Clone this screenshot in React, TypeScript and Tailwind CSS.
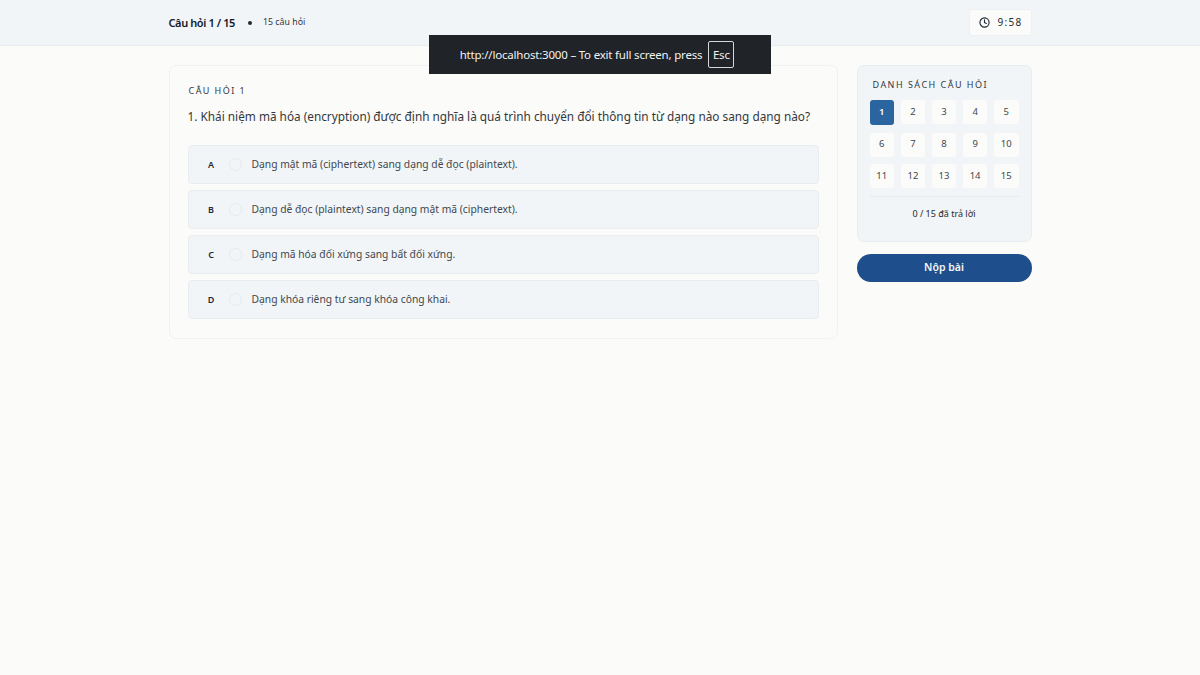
import { Clock } from "lucide-react";

const options = [
  { key: "A", text: "Dạng mật mã (ciphertext) sang dạng dễ đọc (plaintext)." },
  { key: "B", text: "Dạng dễ đọc (plaintext) sang dạng mật mã (ciphertext)." },
  { key: "C", text: "Dạng mã hóa đối xứng sang bất đối xứng." },
  { key: "D", text: "Dạng khóa riêng tư sang khóa công khai." },
];

const numbers = Array.from({ length: 15 }, (_, i) => i + 1);

function App() {
  return (
    <div className="relative min-h-[675px] bg-[#fbfbf9] font-['Noto_Sans','Open_Sans',sans-serif] text-[#1f2933]">
      <header className="h-[46px] border-b border-[#e8ecef] bg-[#f1f5f8]">
        <div className="mx-auto flex h-[45px] w-[863px] items-center justify-between">
          <div className="flex items-center pt-px">
            <span className="text-[11px] font-semibold tracking-[-0.4px] text-[#111827]">Câu hỏi 1 / 15</span>
            <span className="ml-[13px] h-[4px] w-[4px] rounded-full bg-[#1f2933]" />
            <span className="ml-[11px] text-[8.8px] text-[#33383d]">15 câu hỏi</span>
          </div>
          <div className="flex h-[27px] w-[63px] items-center justify-center gap-[7px] rounded-[3px] border border-[#eef1f3] bg-[#fbfbf9] pl-[2px]">
            <Clock size={11} strokeWidth={2.4} className="text-[#1f2933]" />
            <span className="text-[10px] tracking-[0.13em] text-[#26292c]">9:58</span>
          </div>
        </div>
      </header>

      <div className="absolute left-[429px] top-[35px] flex h-[39px] w-[342px] items-center justify-center gap-[6px] bg-[#202327] pr-[6px] text-[11.5px] tracking-[-0.2px] text-[#f1f3f4]">
        <span>http://localhost:3000 – To exit full screen, press</span>
        <span className="flex h-[27px] w-[26px] items-center justify-center rounded-[2px] border border-[#d5d7d9]">Esc</span>
      </div>

      <main className="mx-auto flex w-[863px] items-start gap-[19px] pt-[19px]">
        <section className="h-[274px] w-[669px] rounded-[7px] border border-[#f0f2f3] bg-[#fbfbf9] px-[18px] pt-[18px]">
          <p className="ml-px text-[9px] leading-[13px] tracking-[0.16em] text-[#33383d]">CÂU HỎI 1</p>
          <h1 className="mt-[10px] whitespace-nowrap text-[11.8px] leading-[18px] text-[#33383d]">
            1. Khái niệm mã hóa (encryption) được định nghĩa là quá trình chuyển đổi thông tin từ dạng nào sang dạng nào?
          </h1>
          <div className="mt-[20px] flex flex-col gap-[6px]">
            {options.map((o) => (
              <div key={o.key} className="flex h-[39px] items-center rounded-[4px] border border-[#e9edf0] bg-[#f1f5f8]">
                <span className="w-[40px] pl-[5px] text-center text-[9px] font-semibold text-[#1f2933]">{o.key}</span>
                <span className="h-[13px] w-[13px] rounded-full border border-[#e6eaed]" />
                <span className="ml-[10px] text-[10.3px] text-[#42474d]">{o.text}</span>
              </div>
            ))}
          </div>
        </section>

        <aside className="w-[175px]">
          <div className="h-[177px] rounded-[7px] border border-[#e9edf0] bg-[#f1f5f8] px-[12px] pt-[12px]">
            <p className="pl-[3px] text-[9px] leading-[13px] tracking-[0.165em] text-[#33383d]">DANH SÁCH CÂU HỎI</p>
            <div className="mt-[9px] grid grid-cols-5 gap-x-[6.5px] gap-y-[7.5px]">
              {numbers.map((n) => (
                <div
                  key={n}
                  className={
                    n === 1
                      ? "flex h-[25px] items-center justify-center rounded-[3px] bg-[#2b659f] text-[9.5px] font-semibold text-white"
                      : "flex h-[24px] items-center justify-center rounded-[3px] bg-[#fbfbf9] text-[9.5px] text-[#42474d]"
                  }
                >
                  {n}
                </div>
              ))}
            </div>
            <div className="mt-[8px] border-t border-[#e6eaed] pt-[10px] text-center text-[9px] leading-[13px] text-[#26292c]">0 / 15 đã trả lời</div>
          </div>
          <button type="button" className="mt-[12px] h-[28px] w-full rounded-full bg-[#1f4e8c] text-[10.5px] font-semibold text-[#f4f6f8]">
            Nộp bài
          </button>
        </aside>
      </main>
    </div>
  );
}

export default App;
